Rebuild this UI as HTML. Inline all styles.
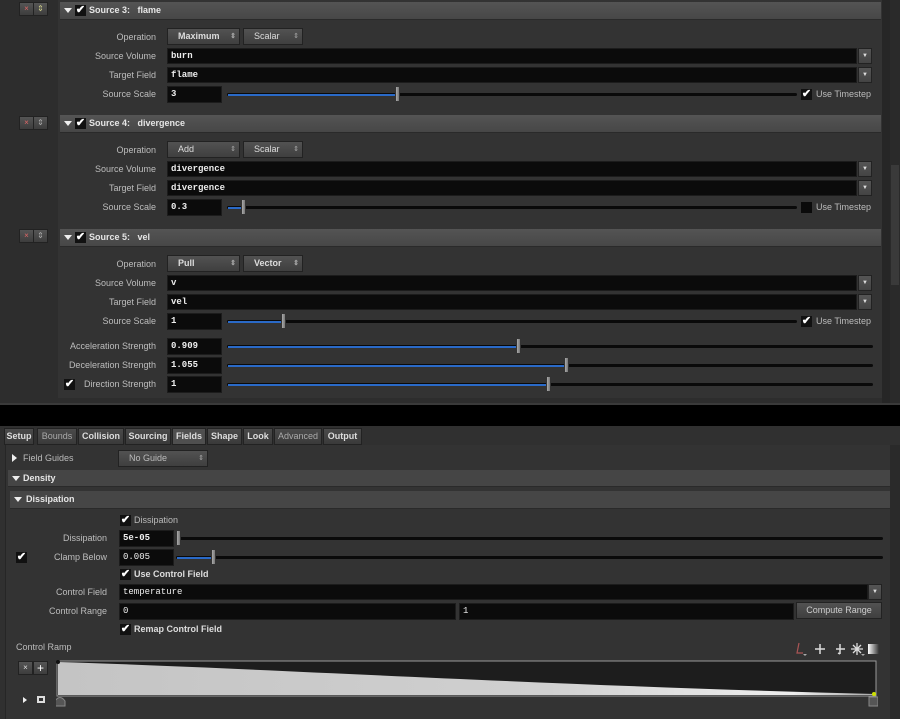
<!DOCTYPE html>
<html><head><meta charset="utf-8"><style>
*{box-sizing:border-box;margin:0;padding:0}
body{width:900px;height:719px;background:#000;position:relative;overflow:hidden;font-family:"Liberation Sans",sans-serif;font-size:9px;color:#c8c8c8}
.a{position:absolute}
.lbl{position:absolute;text-align:right;color:#bdbdbd;font-size:9px;line-height:16px}
.fld{position:absolute;background:#0b0b0b;border:1px solid #1c1c1c;color:#eee;font-family:"Liberation Mono",monospace;font-weight:bold;font-size:9px;line-height:14px;padding-left:3px}
.hdr{position:absolute;background:linear-gradient(#545454,#474747);border-bottom:1px solid #2a2a2a;color:#e6e6e6;font-weight:bold;font-size:9px;line-height:17px}
.btn{position:absolute;background:linear-gradient(#525252,#3f3f3f);border:1px solid #222;color:#ddd;font-size:9px;line-height:15px;text-align:center}
.op{text-align:left;padding-left:10px}
.dd{position:absolute;background:linear-gradient(#555,#444);border:1px solid #222;width:14px;height:16px;color:#ddd;font-size:6px;text-align:center;line-height:14px}
.trk{position:absolute;height:3px;background:#0a0a0a;border-radius:2px}
.blu{position:absolute;height:2px;background:#2a6ac8}
.hnd{position:absolute;width:5px;height:16px;background:linear-gradient(90deg,#aaa,#777);border:1px solid #333}
.chk{position:absolute;width:11px;height:11px;background:#111;color:#fff;font-size:11px;line-height:10px;text-align:center;font-weight:bold}
.tri{position:absolute;width:0;height:0;border-left:4px solid transparent;border-right:4px solid transparent;border-top:5px solid #eee}
.tab{position:absolute;top:428px;height:17px;background:linear-gradient(#4a4a4a,#3a3a3a);border:1px solid #222;color:#ddd;font-weight:bold;font-size:9px;line-height:15px;text-align:center}
.sm{position:absolute;width:15px;height:14px;background:linear-gradient(#555,#3d3d3d);border:1px solid #222;font-size:8px;text-align:center;line-height:12px}
.sp{float:right;width:12px;font-size:7px;text-align:center;color:#aaa}
</style></head><body>
<div class="a" style="left:0;top:0;width:890px;height:405px;background:#2d2d2d"></div>
<div class="a" style="left:58px;top:0;width:824px;height:398px;background:#333"></div>
<div class="a" style="left:882px;top:0;width:8px;height:405px;background:#262626"></div>
<div class="a" style="left:890px;top:0;width:10px;height:405px;background:#2a2a2a"></div>
<div class="a" style="left:891px;top:165px;width:8px;height:120px;background:#3a3a3a"></div>
<div class="a" style="left:0;top:403px;width:900px;height:2px;background:#3a3a3a"></div>

<div class="sm" style="left:19px;top:2px;color:#d66">×</div><div class="sm" style="left:33px;top:2px;color:#cc8">⇕</div>
<div class="hdr" style="left:60px;top:2px;width:821px;height:18px"><span class="tri" style="left:4px;top:6px"></span><span class="chk" style="left:15px;top:3px">✔</span><span class="a" style="left:29px">Source 3:&nbsp;&nbsp; flame</span></div>
<div class="lbl" style="left:60px;top:29px;width:96px">Operation</div>
<div class="btn op" style="left:167px;top:28px;width:73px;font-weight:bold">Maximum<span class="sp">⇕</span></div>
<div class="btn op" style="left:243px;top:28px;width:60px">Scalar<span class="sp">⇕</span></div>
<div class="lbl" style="left:60px;top:48px;width:96px">Source Volume</div>
<div class="fld" style="left:167px;top:48px;width:690px;height:16px">burn</div><div class="dd" style="left:858px;top:48px">▼</div>
<div class="lbl" style="left:60px;top:67px;width:96px">Target Field</div>
<div class="fld" style="left:167px;top:67px;width:690px;height:16px">flame</div><div class="dd" style="left:858px;top:67px">▼</div>
<div class="lbl" style="left:60px;top:86px;width:96px">Source Scale</div>
<div class="fld" style="left:167px;top:86px;width:55px;height:17px">3</div>
<div class="trk" style="left:227px;top:93px;width:570px"></div><div class="blu" style="left:228px;top:94px;width:170px"></div><div class="hnd" style="left:395px;top:86px"></div>
<div class="chk" style="left:801px;top:89px">✔</div><div class="a" style="left:816px;top:89px;color:#bbb">Use Timestep</div>

<div class="sm" style="left:19px;top:116px;color:#d66">×</div><div class="sm" style="left:33px;top:116px;color:#aaa">⇕</div>
<div class="hdr" style="left:60px;top:115px;width:821px;height:18px"><span class="tri" style="left:4px;top:6px"></span><span class="chk" style="left:15px;top:3px">✔</span><span class="a" style="left:29px">Source 4:&nbsp;&nbsp; divergence</span></div>
<div class="lbl" style="left:60px;top:142px;width:96px">Operation</div>
<div class="btn op" style="left:167px;top:141px;width:73px">Add<span class="sp">⇕</span></div>
<div class="btn op" style="left:243px;top:141px;width:60px">Scalar<span class="sp">⇕</span></div>
<div class="lbl" style="left:60px;top:161px;width:96px">Source Volume</div>
<div class="fld" style="left:167px;top:161px;width:690px;height:16px">divergence</div><div class="dd" style="left:858px;top:161px">▼</div>
<div class="lbl" style="left:60px;top:180px;width:96px">Target Field</div>
<div class="fld" style="left:167px;top:180px;width:690px;height:16px">divergence</div><div class="dd" style="left:858px;top:180px">▼</div>
<div class="lbl" style="left:60px;top:199px;width:96px">Source Scale</div>
<div class="fld" style="left:167px;top:199px;width:55px;height:17px">0.3</div>
<div class="trk" style="left:227px;top:206px;width:570px"></div><div class="blu" style="left:228px;top:207px;width:16px"></div><div class="hnd" style="left:241px;top:199px"></div>
<div class="chk" style="left:801px;top:202px;background:#0a0a0a"></div><div class="a" style="left:816px;top:202px;color:#bbb">Use Timestep</div>

<div class="sm" style="left:19px;top:229px;color:#d66">×</div><div class="sm" style="left:33px;top:229px;color:#aaa">⇕</div>
<div class="hdr" style="left:60px;top:229px;width:821px;height:18px"><span class="tri" style="left:4px;top:6px"></span><span class="chk" style="left:15px;top:3px">✔</span><span class="a" style="left:29px">Source 5:&nbsp;&nbsp; vel</span></div>
<div class="lbl" style="left:60px;top:256px;width:96px">Operation</div>
<div class="btn op" style="left:167px;top:255px;width:73px;font-weight:bold">Pull<span class="sp">⇕</span></div>
<div class="btn op" style="left:243px;top:255px;width:60px;font-weight:bold">Vector<span class="sp">⇕</span></div>
<div class="lbl" style="left:60px;top:275px;width:96px">Source Volume</div>
<div class="fld" style="left:167px;top:275px;width:690px;height:16px">v</div><div class="dd" style="left:858px;top:275px">▼</div>
<div class="lbl" style="left:60px;top:294px;width:96px">Target Field</div>
<div class="fld" style="left:167px;top:294px;width:690px;height:16px">vel</div><div class="dd" style="left:858px;top:294px">▼</div>
<div class="lbl" style="left:60px;top:313px;width:96px">Source Scale</div>
<div class="fld" style="left:167px;top:313px;width:55px;height:17px">1</div>
<div class="trk" style="left:227px;top:320px;width:570px"></div><div class="blu" style="left:228px;top:321px;width:56px"></div><div class="hnd" style="left:281px;top:313px"></div>
<div class="chk" style="left:801px;top:316px">✔</div><div class="a" style="left:816px;top:316px;color:#bbb">Use Timestep</div>

<div class="lbl" style="left:30px;top:338px;width:126px">Acceleration Strength</div>
<div class="fld" style="left:167px;top:338px;width:55px;height:17px">0.909</div>
<div class="trk" style="left:227px;top:345px;width:646px"></div><div class="blu" style="left:228px;top:346px;width:291px"></div><div class="hnd" style="left:516px;top:338px"></div>
<div class="lbl" style="left:30px;top:357px;width:126px">Deceleration Strength</div>
<div class="fld" style="left:167px;top:357px;width:55px;height:17px">1.055</div>
<div class="trk" style="left:227px;top:364px;width:646px"></div><div class="blu" style="left:228px;top:365px;width:339px"></div><div class="hnd" style="left:564px;top:357px"></div>
<div class="chk" style="left:64px;top:379px">✔</div>
<div class="lbl" style="left:30px;top:376px;width:126px">Direction Strength</div>
<div class="fld" style="left:167px;top:376px;width:55px;height:17px">1</div>
<div class="trk" style="left:227px;top:383px;width:646px"></div><div class="blu" style="left:228px;top:384px;width:321px"></div><div class="hnd" style="left:546px;top:376px"></div>

<div class="a" style="left:0;top:426px;width:900px;height:293px;background:#303030"></div>
<div class="a" style="left:5px;top:445px;width:886px;height:274px;background:#333;border-left:1px solid #262626"></div>
<div class="a" style="left:890px;top:445px;width:10px;height:274px;background:#2a2a2a"></div>
<div class="tab" style="left:4px;width:30px">Setup</div>
<div class="tab" style="left:37px;width:40px;font-weight:normal;color:#aaa">Bounds</div>
<div class="tab" style="left:78px;width:46px">Collision</div>
<div class="tab" style="left:125px;width:46px">Sourcing</div>
<div class="tab" style="left:172px;width:34px;background:#4f4f4f">Fields</div>
<div class="tab" style="left:207px;width:35px">Shape</div>
<div class="tab" style="left:243px;width:30px">Look</div>
<div class="tab" style="left:274px;width:48px;font-weight:normal;color:#aaa">Advanced</div>
<div class="tab" style="left:323px;width:39px">Output</div>

<div class="a" style="left:12px;top:454px;width:0;height:0;border-top:4px solid transparent;border-bottom:4px solid transparent;border-left:5px solid #eee"></div>
<div class="a" style="left:23px;top:450px;line-height:16px;color:#bbb">Field Guides</div>
<div class="btn op" style="left:118px;top:450px;width:90px;color:#bbb">No Guide<span class="sp">⇕</span></div>
<div class="hdr" style="left:8px;top:470px;width:882px;height:17px;background:#454545"><span class="tri" style="left:4px;top:6px"></span><span class="a" style="left:15px">Density</span></div>
<div class="hdr" style="left:10px;top:491px;width:880px;height:18px;background:#464646"><span class="tri" style="left:4px;top:6px"></span><span class="a" style="left:16px">Dissipation</span></div>

<div class="chk" style="left:120px;top:515px">✔</div><div class="a" style="left:134px;top:515px;color:#bbb">Dissipation</div>
<div class="lbl" style="left:10px;top:530px;width:97px">Dissipation</div>
<div class="fld" style="left:119px;top:530px;width:55px;height:17px">5e-05</div>
<div class="trk" style="left:176px;top:537px;width:707px"></div><div class="hnd" style="left:176px;top:530px"></div>
<div class="chk" style="left:16px;top:552px">✔</div>
<div class="lbl" style="left:10px;top:549px;width:97px">Clamp Below</div>
<div class="fld" style="left:119px;top:549px;width:55px;height:17px;font-weight:normal">0.005</div>
<div class="trk" style="left:176px;top:556px;width:707px"></div><div class="blu" style="left:177px;top:557px;width:36px"></div><div class="hnd" style="left:211px;top:549px"></div>
<div class="chk" style="left:120px;top:569px">✔</div><div class="a" style="left:134px;top:569px;color:#ddd;font-weight:bold">Use Control Field</div>
<div class="lbl" style="left:10px;top:584px;width:97px">Control Field</div>
<div class="fld" style="left:119px;top:584px;width:749px;height:16px;font-weight:normal">temperature</div><div class="dd" style="left:868px;top:584px">▼</div>
<div class="lbl" style="left:10px;top:603px;width:97px">Control Range</div>
<div class="fld" style="left:119px;top:603px;width:337px;height:17px;font-weight:normal">0</div>
<div class="fld" style="left:459px;top:603px;width:335px;height:17px;font-weight:normal">1</div>
<div class="btn" style="left:796px;top:602px;width:86px;height:17px;color:#ccc">Compute Range</div>
<div class="chk" style="left:120px;top:624px">✔</div><div class="a" style="left:134px;top:624px;color:#ddd;font-weight:bold">Remap Control Field</div>
<div class="a" style="left:16px;top:642px;color:#bbb">Control Ramp</div>
<svg class="a" style="left:795px;top:641px" width="86" height="16">
<path d="M4,2 L2,12 L8,12" stroke="#a55" fill="none" stroke-width="1.2"/><path d="M8,13 l2,2 l2,-2z" fill="#aaa"/>
<path d="M25,3 V13 M20,8 H30" stroke="#ddd" stroke-width="1.5"/>
<path d="M45,3 V13 M41,8 H50 M43,12 L45,13" stroke="#ddd" stroke-width="1.5"/>
<path d="M62,2 V14 M56,8 H68 M58,4 L66,12 M66,4 L58,12" stroke="#ddd" stroke-width="1.3"/><path d="M66,13 l2,2 l2,-2z" fill="#aaa"/>
</svg>
<div class="a" style="left:868px;top:644px;width:11px;height:10px;background:linear-gradient(90deg,#fff,#333)"></div>
<div class="sm" style="left:18px;top:661px;color:#ddd">×</div><div class="sm" style="left:33px;top:661px;color:#fff;font-size:12px">+</div>
<svg class="a" style="left:56px;top:660px" width="822" height="48">
<defs><linearGradient id="g" x1="0" x2="1"><stop offset="0" stop-color="#c4c4c4"/><stop offset="0.6" stop-color="#d0d0d0"/><stop offset="0.9" stop-color="#eee"/><stop offset="1" stop-color="#aaa"/></linearGradient></defs>
<rect x="1" y="1" width="819" height="35" fill="#1d1d1d" stroke="#999" stroke-width="1"/>
<path d="M2,2 C200,8 500,26 819,34 L819,35 L2,35 Z" fill="url(#g)"/>
<circle cx="2" cy="2" r="2" fill="#111"/>
<circle cx="818" cy="34" r="2" fill="#cde000"/>
<path d="M-3,46 L-3,41 Q2,34 7,41 L7,46 Z" transform="translate(2,0)" fill="#555" stroke="#888"/>
<rect x="813" y="37" width="9" height="9" fill="#555" stroke="#888"/>
</svg>
<div class="a" style="left:23px;top:697px;width:0;height:0;border-top:3px solid transparent;border-bottom:3px solid transparent;border-left:4px solid #eee"></div>
<div class="a" style="left:37px;top:696px;width:8px;height:7px;border:2px solid #ddd"></div>
</body></html>
